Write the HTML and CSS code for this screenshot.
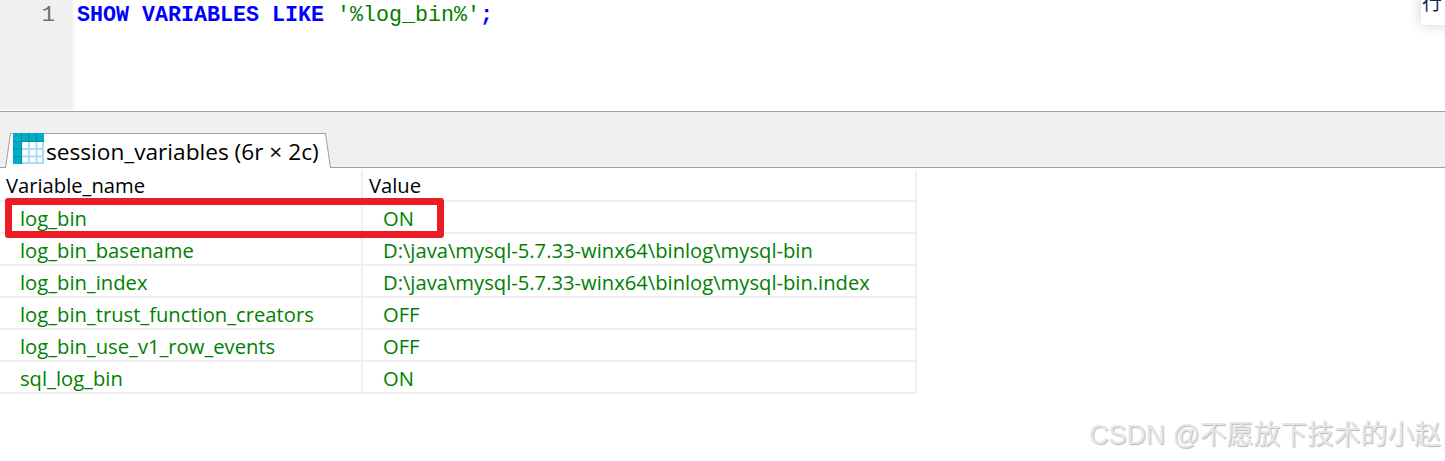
FILE: index.html
```html
<!DOCTYPE html>
<html lang="zh">
<head>
<meta charset="utf-8">
<title>session_variables</title>
<link rel="stylesheet" href="styles.css">
</head>
<body>
<section class="editor">
  <div class="gutter">1</div>
  <pre class="code"><span class="kw">SHOW VARIABLES LIKE</span> <span class="str">'%log_bin%'</span><span class="kw">;</span></pre>
</section>
<section class="tabbar">
  <div class="tab">
    <svg class="tab-shape" width="326" height="37" viewBox="0 0 326 37" aria-hidden="true"><path d="M0.5 36 L5.5 1.5 H320.5 L325.5 36" fill="#fff" stroke="#a0a0a0"/></svg>
    <svg class="tab-icon" width="31" height="31" viewBox="0 0 31 31" aria-hidden="true">
      <rect x="0" y="0" width="31" height="31" fill="#a9dcf8"/>
      <rect x="9" y="9" width="20" height="20" fill="#fff"/>
      <path d="M0 0H31V8.5H8.5V31H0Z" fill="#00adc6"/>
      <path d="M8.5 0V31M16 0V8.5M23.5 0V8.5M0 8.5H31M0 16H8.5M0 23.5H8.5" stroke="#0a8ea6" stroke-width="1.2" fill="none"/>
      <path d="M16 9V30M23.5 9V30M9 16H30M9 23.5H30" stroke="#a9dcf8" stroke-width="2" fill="none"/>
    </svg>
    <span class="tab-label">session_variables (6r × 2c)</span>
  </div>
</section>
<section class="results">
  <div class="grid">
    <div class="row head"><div class="c1">Variable_name</div><div class="c2">Value</div></div>
    <div class="row"><div class="c1">log_bin</div><div class="c2">ON</div></div>
    <div class="row"><div class="c1">log_bin_basename</div><div class="c2">D:\java\mysql-5.7.33-winx64\binlog\mysql-bin</div></div>
    <div class="row"><div class="c1">log_bin_index</div><div class="c2">D:\java\mysql-5.7.33-winx64\binlog\mysql-bin.index</div></div>
    <div class="row"><div class="c1">log_bin_trust_function_creators</div><div class="c2">OFF</div></div>
    <div class="row"><div class="c1">log_bin_use_v1_row_events</div><div class="c2">OFF</div></div>
    <div class="row"><div class="c1">sql_log_bin</div><div class="c2">ON</div></div>
  </div>
</section>
<div class="highlight"></div>
<div class="popup"><span class="popup-text">行</span></div>
<div class="watermark">CSDN @不愿放下技术的小赵</div>
</body>
</html>
```
FILE: styles.css
```css
* { box-sizing: border-box; }
html, body { margin: 0; padding: 0; }
body {
  width: 1445px;
  height: 461px;
  overflow: hidden;
  background: #fff;
  position: relative;
  font-family: "Open Sans", "Noto Sans", "Liberation Sans", sans-serif;
}
.editor {
  display: flex;
  height: 112px;
  border-bottom: 1px solid #a0a0a0;
}
.gutter {
  width: 75px;
  height: 110px;
  background: #f0f0f0;
  border-right: 1px solid #f6f6f6;
  box-shadow: inset -1px 0 0 #fff;
  color: #6e6e6e;
  font: 22.5px/31px "Liberation Mono", monospace;
  text-align: right;
  padding-right: 19px;
  flex: none;
}
.code {
  margin: 0 0 0 2px;
  font: 21.67px/31px "Liberation Mono", monospace;
  white-space: pre;
}
.kw { color: #0000ff; font-weight: 700; }
.str { color: #008000; }
.tabbar {
  height: 56px;
  background: #f0f0f0;
  border-bottom: 1px solid #a0a0a0;
  padding: 20px 0 0 5px;
}
.tab {
  position: relative;
  width: 326px;
  height: 36px;
  display: flex;
  align-items: center;
  padding-left: 8px;
  gap: 2px;
}
.tab-shape { position: absolute; left: 0; top: 0; }
.tab-icon, .tab-label { position: relative; }
.tab-icon { flex: none; margin-top: -3px; }
.tab-label {
  font-size: 22.65px;
  line-height: 30px;
  color: #000;
  white-space: nowrap;
  margin-top: 3px;
}
.results { padding-top: 2px; }
.grid {
  width: 917px;
  border-right: 2px solid #f0f0f0;
}
.row {
  display: grid;
  grid-template-columns: 363px 1fr;
  height: 32px;
  border-bottom: 2px solid #f0f0f0;
  color: #008000;
  font-size: 20.2px;
  line-height: 32px;
  white-space: nowrap;
}
.c1 { padding-left: 20px; border-right: 2px solid #f0f0f0; }
.c2 { padding-left: 20px; }
.head { color: #000; line-height: 30px; }
.head .c1 { padding-left: 6px; }
.head .c2 { padding-left: 6px; }
.highlight {
  position: absolute;
  left: 5px;
  top: 198px;
  width: 439px;
  height: 40px;
  border: 7px solid #ed1c24;
  border-radius: 3px;
}
.popup {
  position: absolute;
  left: 1421px;
  top: -10px;
  width: 40px;
  height: 35px;
  background: #fff;
  box-shadow: 0 0 14px rgba(0, 0, 0, .18);
  overflow: hidden;
}
.popup-text {
  position: absolute;
  left: 1px;
  top: 0;
  font: 20px/24px "Noto Sans CJK SC", sans-serif;
  color: #1a2a50;
}
.watermark {
  position: absolute;
  right: 4px;
  top: 418px;
  font: 26.8px/34px "Liberation Sans", "Noto Sans CJK SC", sans-serif;
  color: #e6e6e6;
  text-shadow: 1px 1px 1px #b8b8b8;
  white-space: nowrap;
}
```
